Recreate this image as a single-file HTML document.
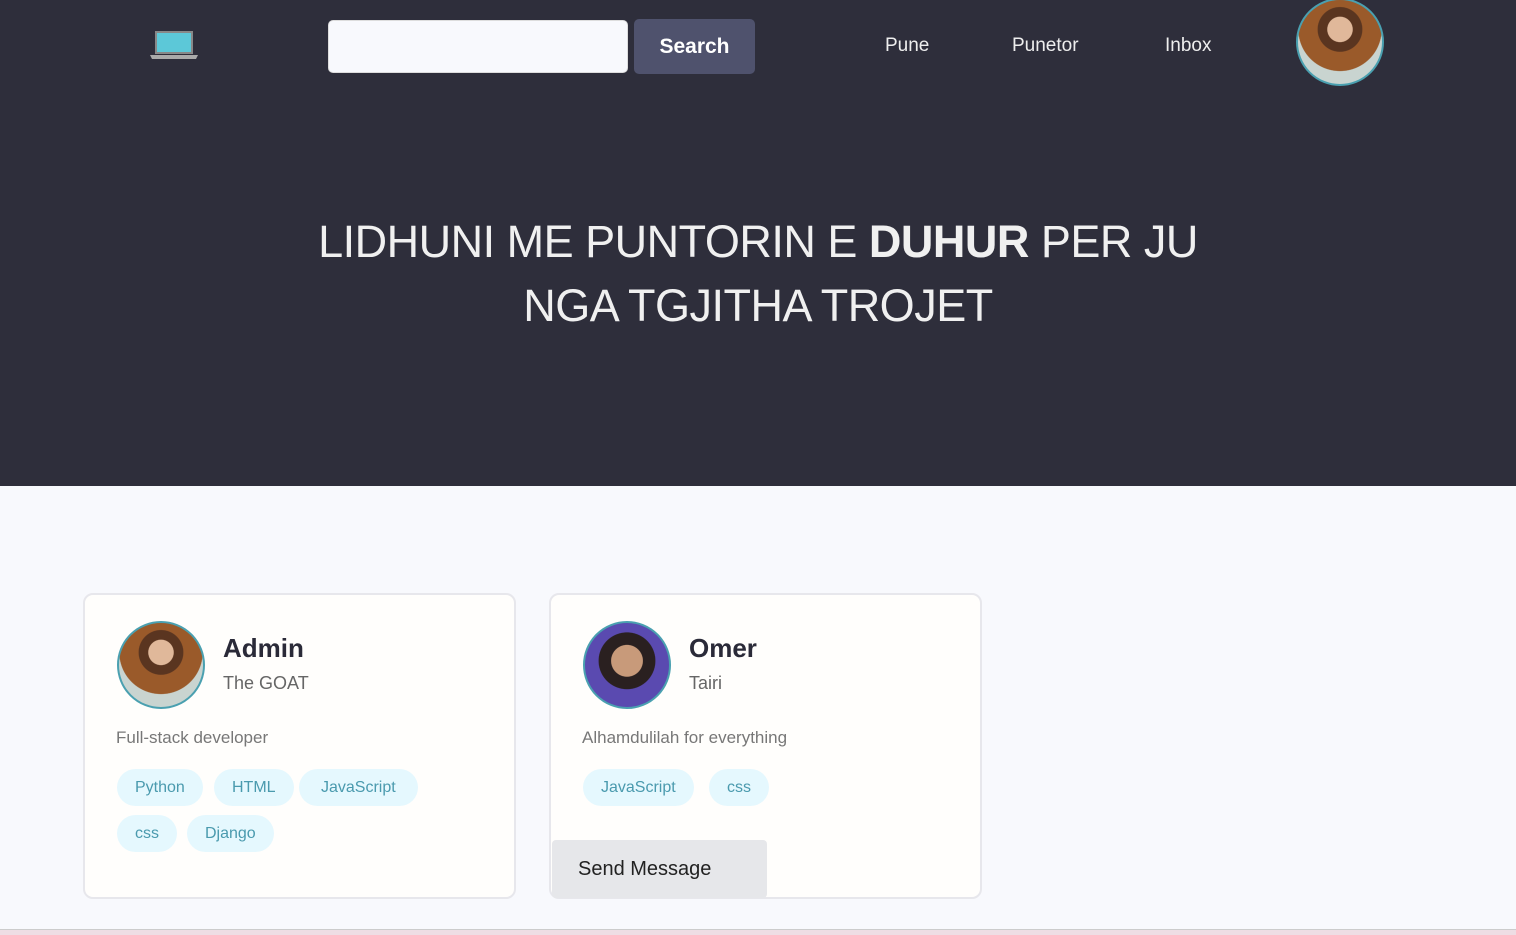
<!DOCTYPE html>
<html><head><meta charset="utf-8"><style>
*{margin:0;padding:0;box-sizing:border-box}
body{width:1516px;height:935px;overflow:hidden;background:#f8f9fd;font-family:"Liberation Sans",sans-serif;position:relative}
.hdr{position:absolute;left:0;top:0;width:1516px;height:486px;background:#2e2e3b}
.abs{position:absolute}
.search{left:328px;top:20px;width:300px;height:53px;background:#f8f9fd;border-radius:5px;border:1px solid #ddd}
.btn{left:634px;top:19px;width:121px;height:55px;background:#4f526d;border-radius:5px;color:#fff;font-size:21px;font-weight:bold;text-align:center;line-height:55px}
.nav{color:#eee;font-size:19px;top:35px}
.av{border-radius:50%;border:2px solid #4aa0b0;background:radial-gradient(circle at 50% 35%,#e0b89a 0 18%,#5a3520 19% 32%,#9a5a2a 33% 60%,#c9d4d0 61%)}
h1{position:absolute;left:0;width:1516px;top:210px;text-align:center;color:#f0f0f0;font-weight:normal;font-size:45px;line-height:64px;letter-spacing:-0.5px}
h1 strong{font-weight:700}
.card{position:absolute;top:593px;width:433px;height:306px;background:#fffefc;border:2px solid #e7e7ec;border-radius:10px}
.name{position:absolute;left:138px;top:38px;font-size:26px;font-weight:bold;color:#2a2a38}
.sub{position:absolute;left:138px;top:78px;font-size:18px;color:#666}
.bio{position:absolute;left:31px;top:133px;font-size:17px;color:#777}
.tag{position:absolute;height:37px;line-height:37px;padding:0 18px;border-radius:19px;background:#e5f8fe;color:#4a9aae;font-size:16px}
</style></head><body>
<div class="hdr"></div>
<svg class="abs" style="left:150px;top:30px" width="48" height="30"><rect x="5" y="1" width="38" height="23" fill="#888"/><rect x="7" y="3" width="34" height="19" fill="#5cc8d8"/><polygon points="0,25 48,25 46,29 2,29" fill="#aaa"/></svg>
<div class="abs search"></div>
<div class="abs btn">Search</div>
<div class="abs nav" style="left:885px">Pune</div>
<div class="abs nav" style="left:1012px">Punetor</div>
<div class="abs nav" style="left:1165px">Inbox</div>
<div class="abs av" style="left:1296px;top:-2px;width:88px;height:88px"></div>
<h1>LIDHUNI ME PUNTORIN E <strong>DUHUR</strong> PER JU<br>NGA TGJITHA TROJET</h1>
<div class="card" style="left:83px">
<div class="av" style="position:absolute;left:32px;top:26px;width:88px;height:88px"></div>
<div class="name">Admin</div><div class="sub">The GOAT</div>
<div class="bio">Full-stack developer</div>
<div class="tag" style="left:32px;top:174px">Python</div>
<div class="tag" style="left:129px;top:174px">HTML</div>
<div class="tag" style="left:214px;top:174px;padding:0 22px">JavaScript</div>
<div class="tag" style="left:32px;top:220px">css</div>
<div class="tag" style="left:102px;top:220px">Django</div>
</div>
<div class="card" style="left:549px">
<div class="av" style="position:absolute;left:32px;top:26px;width:88px;height:88px;background:radial-gradient(circle at 50% 45%,#c89a7a 0 25%,#2a2020 26% 45%,#5a4ab0 46%)"></div>
<div class="name">Omer</div><div class="sub">Tairi</div>
<div class="bio">Alhamdulilah for everything</div>
<div class="tag" style="left:32px;top:174px">JavaScript</div>
<div class="tag" style="left:158px;top:174px">css</div>
<div style="position:absolute;left:1px;top:245px;width:215px;height:58px;background:#e6e7ea;border-radius:4px;font-size:20px;color:#222;line-height:58px;padding-left:26px">Send Message</div>
</div>
<div class="abs" style="left:0;top:929px;width:1516px;height:6px;background:#eedde4;border-top:1px solid #ccc"></div>
</body></html>
